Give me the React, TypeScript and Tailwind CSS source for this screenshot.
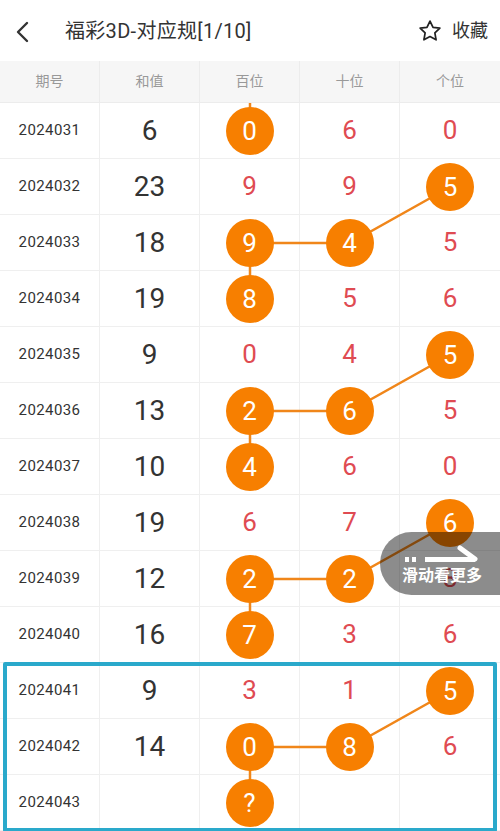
import React from "react";

type Row = {
  issue: string;
  sum: string;
  digits: string[];
  hits: number[]; // columns (0=百,1=十,2=个) drawn as circles
};

const rows: Row[] = [
  { issue: "2024031", sum: "6", digits: ["0", "6", "0"], hits: [0] },
  { issue: "2024032", sum: "23", digits: ["9", "9", "5"], hits: [2] },
  { issue: "2024033", sum: "18", digits: ["9", "4", "5"], hits: [0, 1] },
  { issue: "2024034", sum: "19", digits: ["8", "5", "6"], hits: [0] },
  { issue: "2024035", sum: "9", digits: ["0", "4", "5"], hits: [2] },
  { issue: "2024036", sum: "13", digits: ["2", "6", "5"], hits: [0, 1] },
  { issue: "2024037", sum: "10", digits: ["4", "6", "0"], hits: [0] },
  { issue: "2024038", sum: "19", digits: ["6", "7", "6"], hits: [2] },
  { issue: "2024039", sum: "12", digits: ["2", "2", "8"], hits: [0, 1] },
  { issue: "2024040", sum: "16", digits: ["7", "3", "6"], hits: [0] },
  { issue: "2024041", sum: "9", digits: ["3", "1", "5"], hits: [2] },
  { issue: "2024042", sum: "14", digits: ["0", "8", "6"], hits: [0, 1] },
  { issue: "2024043", sum: "", digits: ["?", "", ""], hits: [0] },
];

// trend path, in body coordinates (row height 56, column width 100)
const paths = [
  "M250 0 L250 28",
  "M450 84 L350 140 L250 140 L250 196",
  "M450 252 L350 308 L250 308 L250 364",
  "M450 420 L350 476 L250 476 L250 532",
  "M450 588 L350 644 L250 644 L250 700",
];

const font = { fontFamily: "Roboto, 'Noto Sans CJK SC', sans-serif" };

function Header() {
  return (
    <div className="h-[61px] flex items-center bg-white">
      <svg width="40" height="40" viewBox="0 0 40 40" className="ml-[1px]">
        <path d="M26 12 L17 21 L26 30" fill="none" stroke="#333" strokeWidth="2.4" strokeLinecap="round" strokeLinejoin="round" />
      </svg>
      <div className="ml-[24px] text-[20px] text-[#333] tracking-[0.3px]">福彩3D-对应规[1/10]</div>
      <div className="ml-auto mr-[12px] flex items-center gap-[9px]">
        <svg width="26" height="26" viewBox="0 0 24 24">
          <path
            d="M12 2.8 L14.8 8.6 L21.1 9.4 L16.5 13.8 L17.6 20.1 L12 17.1 L6.4 20.1 L7.5 13.8 L2.9 9.4 L9.2 8.6 Z"
            fill="none"
            stroke="#222"
            strokeWidth="1.6"
            strokeLinejoin="round"
          />
        </svg>
        <span className="text-[18px] text-[#333]">收藏</span>
      </div>
    </div>
  );
}

function Ball({ text }: { text: string }) {
  return (
    <div className="relative z-10 w-[48px] h-[48px] rounded-full bg-[#f77f00] flex items-center justify-center text-white text-[26px] leading-none">
      {text}
    </div>
  );
}

export default function App() {
  return (
    <div className="w-[500px] h-[831px] bg-white overflow-hidden" style={font}>
      <Header />
      <div className="grid grid-cols-5 h-[42px] bg-[#f6f6f6] border-b border-[#ececec] text-[14px] text-[#999]">
        {["期号", "和值", "百位", "十位", "个位"].map((h, i) => (
          <div key={h} className={`flex items-center justify-center ${i < 4 ? "border-r border-[#ececec]" : ""}`}>
            {h}
          </div>
        ))}
      </div>

      <div className="relative">
        <svg className="absolute inset-0 z-[5] pointer-events-none" width="500" height="728">
          {paths.map((d) => (
            <path key={d} d={d} fill="none" stroke="#f0861a" strokeWidth="2.5" />
          ))}
        </svg>

        {rows.map((r) => (
          <div key={r.issue} className="grid grid-cols-5 h-[56px] border-b border-[#efefef]">
            <div className="flex items-center justify-center border-r border-[#efefef] text-[15px] tracking-[0.4px] text-[#333]">{r.issue}</div>
            <div className="flex items-center justify-center border-r border-[#efefef] text-[28px] text-[#333]">{r.sum}</div>
            {r.digits.map((d, i) => (
              <div key={i} className={`flex items-center justify-center text-[26px] text-[#df4b52] ${i < 2 ? "border-r border-[#efefef]" : ""}`}>
                {r.hits.includes(i) ? <Ball text={d} /> : d}
              </div>
            ))}
          </div>
        ))}

        {/* highlighted latest rows */}
        <div className="absolute left-[3px] right-[3px] top-[559px] h-[170px] border-[4px] border-[#2aa9cb] rounded-[2px] pointer-events-none z-20" />

        {/* swipe hint */}
        <div className="absolute right-0 top-[429px] w-[120px] h-[63px] rounded-l-full bg-black/45 z-30 flex flex-col items-center justify-center pl-[4px]">
          <svg width="80" height="22" viewBox="0 0 80 22">
            <rect x="3" y="13" width="4" height="5" fill="#fff" />
            <rect x="10" y="13" width="4" height="5" fill="#fff" />
            <rect x="23" y="13" width="50" height="5" fill="#fff" />
            <path d="M58 4 L73 15" stroke="#fff" strokeWidth="5" strokeLinecap="round" />
          </svg>
          <span className="mt-[2px] text-[16px] font-bold text-white leading-none">滑动看更多</span>
        </div>
      </div>
    </div>
  );
}
